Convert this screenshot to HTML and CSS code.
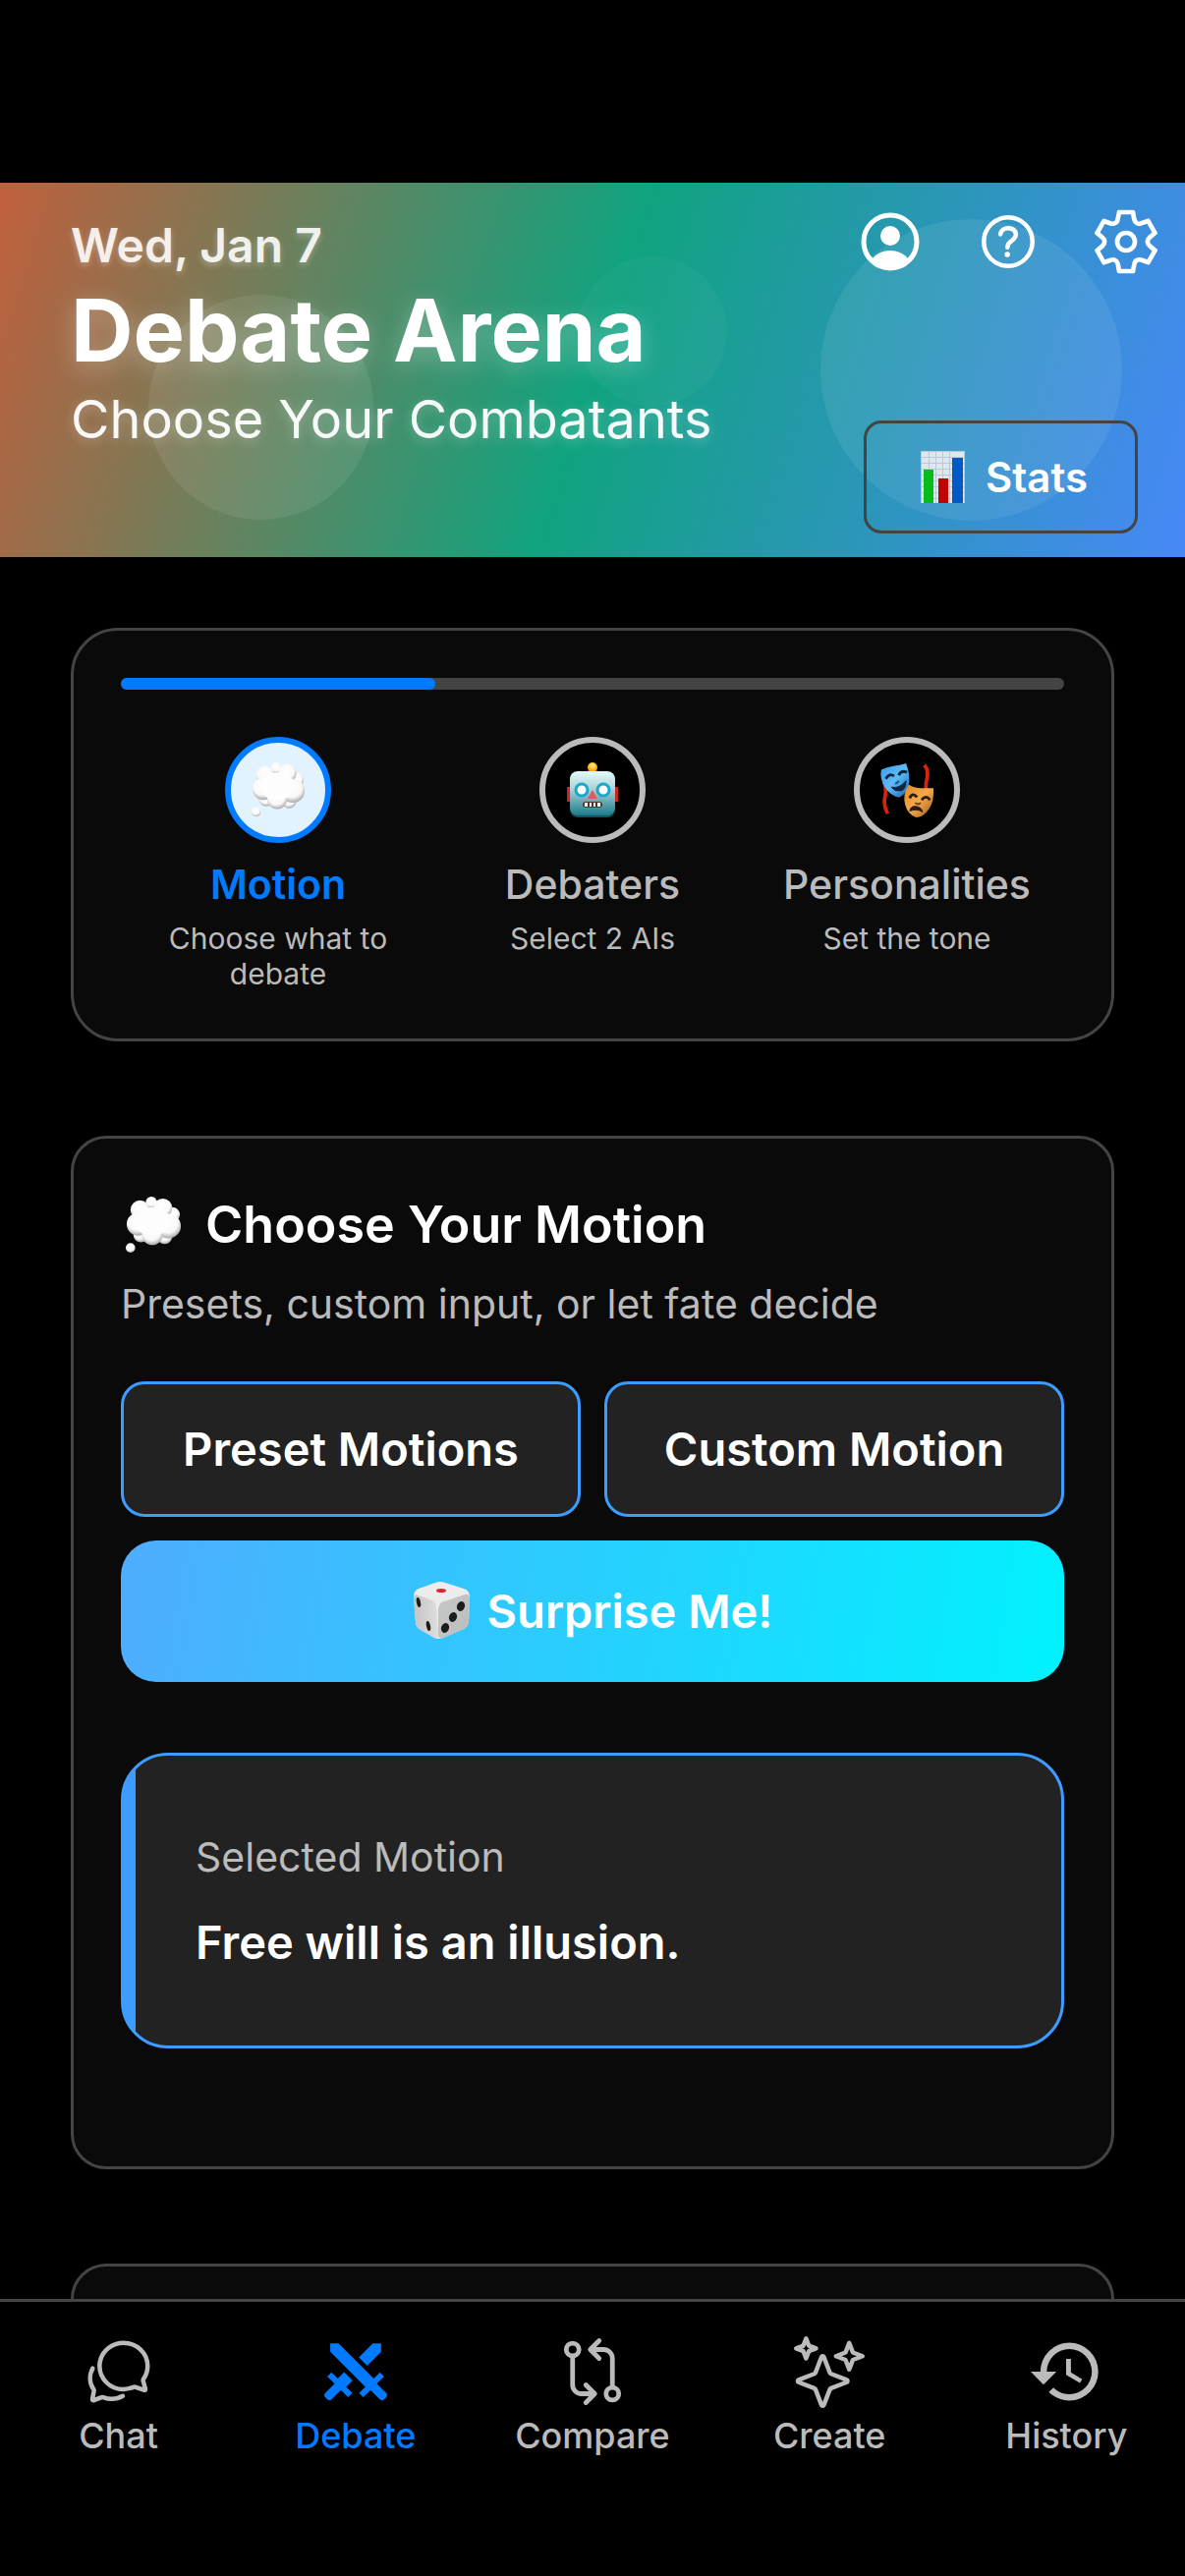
FILE: index.html
```html
<!DOCTYPE html>
<html lang="en">
<head>
<meta charset="utf-8">
<meta name="viewport" content="width=device-width, initial-scale=1">
<title>Debate Arena</title>
<link rel="stylesheet" href="styles.css">
</head>
<body>
<svg class="defs" aria-hidden="true">
  <defs>
    <radialGradient id="puff" cx="46%" cy="36%" r="64%">
      <stop offset="0" stop-color="#fff"/><stop offset=".65" stop-color="#f8f8f8"/><stop offset="1" stop-color="#a6a6a6"/>
    </radialGradient>
    <linearGradient id="metal" x1="0" y1="0" x2="0" y2="1">
      <stop offset="0" stop-color="#e6fbfa"/><stop offset=".4" stop-color="#a9d3d6"/><stop offset="1" stop-color="#1c7b8d"/>
    </linearGradient>
    <radialGradient id="bulb" cx="50%" cy="35%" r="60%">
      <stop offset="0" stop-color="#fff27a"/><stop offset="1" stop-color="#ff9500"/>
    </radialGradient>
    <linearGradient id="joy" x1="0" y1="0" x2="1" y2="1">
      <stop offset="0" stop-color="#3d9be6"/><stop offset=".5" stop-color="#5cbcf8"/><stop offset="1" stop-color="#1c5fae"/>
    </linearGradient>
    <linearGradient id="woe" x1="0" y1="0" x2="1" y2="1">
      <stop offset="0" stop-color="#e08a25"/><stop offset=".5" stop-color="#f5a94c"/><stop offset="1" stop-color="#a35a14"/>
    </linearGradient>
    <linearGradient id="dieLeft" x1="0" y1="0" x2="1" y2="0">
      <stop offset="0" stop-color="#c4c4c4"/><stop offset="1" stop-color="#dedede"/>
    </linearGradient>
    <linearGradient id="dieRight" x1="0" y1="0" x2="1" y2="1">
      <stop offset="0" stop-color="#c6c8c8"/><stop offset="1" stop-color="#bcbcbc"/>
    </linearGradient>
    <symbol id="thought" viewBox="0 0 60 60">
      <g fill="url(#puff)">
        <circle cx="50" cy="19" r="8"/><circle cx="17" cy="40" r="8"/><circle cx="42" cy="42" r="8"/>
        <circle cx="28" cy="6" r="6"/><circle cx="16" cy="14" r="10"/><circle cx="40" cy="12" r="10"/>
        <circle cx="14" cy="29" r="12"/><circle cx="46" cy="31" r="13"/><circle cx="29" cy="40" r="11"/>
        <circle cx="6" cy="54" r="5"/>
      </g>
      <ellipse cx="29" cy="26" rx="19" ry="15" fill="#fdfdfd"/>
    </symbol>
    <path id="cog" d="M-21-90H21L25-68Q27-60 33-57Q38-53 46-56L67-63"/>
  </defs>
</svg>

<div class="app">
  <header class="hero">
    <span class="orb orb-left"></span>
    <span class="orb orb-mid"></span>
    <span class="orb orb-right"></span>
    <div class="hero-text">
      <p class="date">Wed, Jan 7</p>
      <h1>Debate Arena</h1>
      <p class="tagline">Choose Your Combatants</p>
    </div>
    <div class="hero-side">
      <div class="hero-actions">
        <button class="icon-button" aria-label="Profile">
          <svg viewBox="0 0 72 72"><circle cx="36" cy="36" r="27" fill="none" stroke="currentColor" stroke-width="5"/><ellipse cx="36" cy="30" rx="10" ry="10" fill="currentColor"/><path d="M17 54C22 48 29 45 36 45s14 3 19 9a27 27 0 0 1-38 0z" fill="currentColor"/></svg>
        </button>
        <button class="icon-button" aria-label="Help">
          <svg viewBox="0 0 512 512" fill="none" stroke="currentColor" stroke-width="32" stroke-linecap="round"><circle cx="256" cy="256" r="176"/><path d="M200 202.29s.84-17.5 19.57-32.57C230.68 160.77 244 158.18 256 158c10.93-.14 20.69 1.67 26.53 4.45 10 4.76 29.47 16.38 29.47 41.09 0 26-17 37.81-36.37 50.8S251 281.43 251 296"/><circle cx="250" cy="348" r="20" fill="currentColor" stroke="none"/></svg>
        </button>
        <button class="icon-button" aria-label="Settings">
          <svg viewBox="-108 -108 216 216" fill="none" stroke="currentColor" stroke-width="14" stroke-linecap="round" stroke-linejoin="round"><use href="#cog"/><use href="#cog" transform="rotate(60)"/><use href="#cog" transform="rotate(120)"/><use href="#cog" transform="rotate(180)"/><use href="#cog" transform="rotate(240)"/><use href="#cog" transform="rotate(300)"/><circle r="27"/></svg>
        </button>
      </div>
      <button class="stats">
        <svg class="chart" viewBox="0 0 45 53" aria-hidden="true"><path fill="#dfe7ee" d="M0 0h45v53H0z"/><path stroke="#b9c9d6" stroke-width="1" fill="none" d="M.5 0v53M44.500 0v53M0 .5h45M0 6.500h45M0 12.500h45M0 18.500h45M0 24.500h45M0 30.500h45M0 36.500h45M0 42.500h45M0 48.500h45M8.500 0v53M15.500 0v53M22.500 0v53M29.500 0v53"/><path fill="#05bd1b" d="M3 19h10v34H3z"/><path fill="#c00303" d="M18 28h10v25H18z"/><path fill="#0459c4" d="M32 7h11v46H32z"/></svg>
        <span>Stats</span>
      </button>
    </div>
  </header>

  <main class="content">
    <section class="card steps-card">
      <div class="progress"><div class="progress-fill"></div></div>
      <ol class="steps">
        <li class="step active">
          <span class="step-badge"><svg class="step-icon" aria-hidden="true"><use href="#thought"/></svg></span>
          <span class="step-name">Motion</span>
          <span class="step-note">Choose what to debate</span>
        </li>
        <li class="step">
          <span class="step-badge">
            <svg class="step-icon" viewBox="0 0 56 56" aria-hidden="true"><path fill="#d21f26" d="M2 25h5v15H2zM49 25h5v15h-5z"/><ellipse cx="28" cy="11" rx="6" ry="4" fill="#6a4d8f"/><circle cx="28" cy="5" r="5" fill="url(#bulb)"/><rect x="5" y="10" width="46" height="46" rx="8" fill="#12505c"/><rect x="5" y="9" width="46" height="45" rx="8" fill="url(#metal)"/><g fill="#fff" stroke="#19a7cc" stroke-width="3"><circle cx="17" cy="28" r="6"/><circle cx="39" cy="28" r="6"/></g><path fill="#e2595c" d="M28 28l5 9H23z"/><rect x="18" y="40" width="20" height="6" rx="3" fill="#4d3a30"/><path fill="#fff" d="M20 41h3v4h-3zM25 41h2v4h-2zM29 41h2v4h-2zM33 41h3v4h-3z"/></svg>
          </span>
          <span class="step-name">Debaters</span>
          <span class="step-note">Select 2 AIs</span>
        </li>
        <li class="step">
          <span class="step-badge">
            <svg class="step-icon" viewBox="0 0 60 60" aria-hidden="true"><path d="M5 20q3 10 1 18t3 18M49 3q5 6 3 14t-1 12" fill="none" stroke="#d8240a" stroke-width="4"/><path d="M2 8Q8 5 15 4T29 1Q34 14 32 24T22 38Q12 37 6 27T2 8z" fill="url(#joy)"/><path d="M7 18q4-7 9-3M21 14q3-6 9-3" fill="none" stroke="#0b2740" stroke-width="3"/><path d="M13 27q9 2 16-7 0 10-6 11t-10-4z" fill="#0b2740" stroke="#0b2740" stroke-width="1"/><path d="M17 23q3 0 4-3" fill="none" stroke="#17568e" stroke-width="2"/><path d="M32 24Q38 28 45 28T59 28Q60 42 54 51T40 60Q31 57 28 46T32 24z" fill="url(#woe)"/><path d="M33 39q3-7 8-1M46 41q5-6 9 0" fill="none" stroke="#2a1c12" stroke-width="3"/><path d="M33 53q1-6 7-5t7 6q-6-4-14-1z" fill="#2a1c12" stroke="#2a1c12" stroke-width="1"/><path d="M39 44q3 3 6 0" fill="none" stroke="#6d3b10" stroke-width="2"/></svg>
          </span>
          <span class="step-name">Personalities</span>
          <span class="step-note">Set the tone</span>
        </li>
      </ol>
    </section>

    <section class="card">
      <h2><svg class="title-icon" aria-hidden="true"><use href="#thought"/></svg>Choose Your Motion</h2>
      <p class="lead">Presets, custom input, or let fate decide</p>
      <div class="choices">
        <button class="choice">Preset Motions</button>
        <button class="choice">Custom Motion</button>
        <button class="surprise">
          <svg class="die" viewBox="0 0 60 60" aria-hidden="true"><path fill="#ececec" d="M1 15Q1 9 6 7L23 1Q28-1 33 1L52 7Q58 9 58 15L57 41Q56 46 52 48L31 57Q27 59 22 57L8 49Q4 47 3 42z"/><path fill="url(#dieLeft)" d="M1 16Q2 12 6 14L20 19Q24 21 24 26L26 53Q26 58 22 57L8 49Q4 47 3 42z"/><path fill="url(#dieRight)" d="M26 27Q27 21 32 20L53 13Q58 12 58 17L57 41Q56 46 52 48L31 57Q26 59 26 53z"/><ellipse cx="29" cy="9" rx="5" ry="2" fill="#e5232e"/><g fill="#1c1c1c"><ellipse cx="6" cy="21" rx="2" ry="5" transform="rotate(-12 6 21)"/><ellipse cx="16" cy="45" rx="2" ry="5" transform="rotate(-12 16 45)"/><ellipse cx="49" cy="25" rx="4" ry="5" transform="rotate(20 49 25)"/><ellipse cx="41" cy="36" rx="4" ry="5" transform="rotate(20 41 36)"/><ellipse cx="33" cy="47" rx="4" ry="5" transform="rotate(20 33 47)"/></g></svg>
          <span>Surprise Me!</span>
        </button>
      </div>
      <div class="selected">
        <p class="selected-label">Selected Motion</p>
        <p class="selected-text">Free will is an illusion.</p>
      </div>
    </section>

    <section class="card next-card"></section>
  </main>

  <nav class="tabs">
    <a class="tab" href="#chat">
      <svg viewBox="0 0 512 512" fill="none" stroke="currentColor" stroke-width="32" stroke-linecap="round"><path d="M431 320.600c-1-3.600 1.200-8.600 3.300-12.200a33.680 33.680 0 012.100-3.100A162 162 0 00464 215c.3-92.200-77.500-167-173.700-167-83.900 0-153.900 57.100-170.300 132.900a160.700 160.700 0 00-3.700 34.200c0 92.300 74.800 169.100 171 169.100 15.300 0 35.900-4.600 47.200-7.700s22.500-7.200 25.400-8.300a26.440 26.440 0 019.300-1.700 26 26 0 0110.100 2l56.700 20.100a13.520 13.520 0 003.900 1 8 8 0 008-8 12.850 12.850 0 00-.5-2.700z"/><path d="M66.460 232a146.230 146.230 0 006.390 152.670c2.310 3.490 3.610 6.190 3.210 8s-11.930 61.870-11.930 61.870a8 8 0 002.710 7.680A8.170 8.170 0 0072 464a7.260 7.260 0 002.910-.6l56.210-22a15.700 15.700 0 0112 .2c18.940 7.380 39.880 12 60.830 12A159.210 159.210 0 00284 432.110"/></svg>
      <span>Chat</span>
    </a>
    <a class="tab current" href="#debate" aria-current="page">
      <svg viewBox="0 0 24 24" fill="currentColor"><path d="M6.200,2.440L18.100,14.340L20.220,12.220L21.630,13.630L19.160,16.100L22.340,19.280C22.730,19.670 22.730,20.300 22.340,20.690L21.630,21.400C21.240,21.790 20.610,21.790 20.220,21.400L17,18.230L14.560,20.700L13.150,19.290L15.270,17.170L3.370,5.270V2.440H6.200M15.890,10L20.630,5.260V2.440H17.800L13.060,7.180L15.890,10M10.940,15L8.110,12.130L5.900,14.340L3.780,12.220L2.370,13.630L4.840,16.100L1.660,19.290C1.270,19.680 1.270,20.310 1.660,20.700L2.370,21.410C2.760,21.800 3.390,21.800 3.780,21.410L7,18.230L9.440,20.700L10.850,19.290L8.730,17.170L10.940,15Z"/></svg>
      <span>Debate</span>
    </a>
    <a class="tab" href="#compare">
      <svg viewBox="0 0 512 512" fill="none" stroke="currentColor" stroke-width="34" stroke-linecap="round" stroke-linejoin="round"><circle cx="112" cy="96" r="46"/><circle cx="400" cy="416" r="46"/><path d="M112 144v208a64 64 0 0064 64h88M400 368V160a64 64 0 00-64-64h-88M304 160l-64-64 64-64M208 352l64 64-64 64"/></svg>
      <span>Compare</span>
    </a>
    <a class="tab" href="#create">
      <svg viewBox="0 0 512 512" fill="none" stroke="currentColor" stroke-width="32" stroke-linejoin="round"><path d="M259.920 262.910L216.400 149.770a9 9 0 00-16.800 0l-43.520 113.140a16 16 0 01-9.170 9.170L33.770 315.600a9 9 0 000 16.800l113.140 43.520a16 16 0 019.170 9.170l43.520 113.140a9 9 0 0016.800 0l43.520-113.140a16 16 0 019.170-9.170l113.140-43.520a9 9 0 000-16.800l-113.140-43.520a16 16 0 01-9.170-9.170zM108 68L88 16 68 68 16 88l52 20 20 52 20-52 52-20-52-20zM426.670 117.330L400 48l-26.670 69.330L304 144l69.330 26.670L400 240l26.670-69.330L496 144l-69.330-26.670z"/></svg>
      <span>Create</span>
    </a>
    <a class="tab" href="#history">
      <svg viewBox="1 1 22 22" fill="currentColor"><path d="M13.500,8H12V13L16.280,15.540L17,14.330L13.500,12.250V8M13,3A9,9 0 0,0 4,12H1L4.960,16.030L9,12H6A7,7 0 0,1 13,5A7,7 0 0,1 20,12A7,7 0 0,1 13,19C11.070,19 9.320,18.210 8.060,16.940L6.640,18.360C8.270,20 10.500,21 13,21A9,9 0 0,0 22,12A9,9 0 0,0 13,3"/></svg>
      <span>History</span>
    </a>
  </nav>
</div>
</body>
</html>
```
FILE: styles.css
```css
:root {
  --accent: #007aff;
  --outline: #3d9cff;
  --line: #444;
  --muted: #bbb;
  --surface: #0a0a0a;
  --raised: #222;
}

* {
  box-sizing: border-box;
  margin: 0;
  padding: 0;
}

body {
  background: #000;
  color: #fff;
  font-family: Inter, "Liberation Sans", sans-serif;
}

button {
  border: 0;
  background: none;
  color: inherit;
  font: inherit;
  cursor: pointer;
}

svg {
  display: block;
  flex: none;
}

.defs {
  position: absolute;
  width: 0;
  height: 0;
}

.app {
  display: flex;
  flex-direction: column;
  height: 100vh;
  padding-top: 186px;
}

/* Header */

.hero {
  position: relative;
  flex: none;
  display: flex;
  justify-content: space-between;
  padding: 24px 24px 24px 72px;
  background: linear-gradient(107.5deg, #c15f3c, #10a37f 50%, #4888f8);
  overflow: hidden;
}

.orb {
  position: absolute;
  border-radius: 50%;
  background: rgba(255, 255, 255, 0.08);
}

.orb-left {
  left: 151px;
  top: 114px;
  width: 229px;
  height: 229px;
}

.orb-mid {
  left: 588px;
  top: 75px;
  width: 152px;
  height: 152px;
  background: rgba(255, 255, 255, 0.03);
}

.orb-right {
  right: 64px;
  top: 37px;
  width: 307px;
  height: 307px;
}

.hero-text,
.hero-side {
  position: relative;
}

.hero-text {
  padding-top: 10px;
}

.date {
  font-size: 48px;
  font-weight: 600;
  line-height: 60px;
  color: rgba(255, 255, 255, 0.9);
  text-shadow: 0 3px 6px rgba(255, 255, 255, 0.3);
}

h1 {
  font-size: 88px;
  font-weight: 700;
  line-height: 112px;
  text-shadow: 0 6px 24px rgba(255, 255, 255, 0.3);
}

.tagline {
  font-size: 54px;
  font-weight: 400;
  line-height: 70px;
  color: rgba(255, 255, 255, 0.95);
  text-shadow: 0 3px 12px rgba(255, 255, 255, 0.3);
}

.hero-side {
  display: flex;
  flex-direction: column;
  align-items: flex-end;
  gap: 146px;
}

.hero-actions {
  display: flex;
  gap: 48px;
}

.icon-button svg {
  width: 72px;
  height: 72px;
}

.stats {
  display: flex;
  align-items: center;
  justify-content: flex-end;
  gap: 21px;
  width: 279px;
  height: 115px;
  margin-right: 24px;
  padding-right: 48px;
  border: 3px solid var(--line);
  border-radius: 18px;
  font-size: 42px;
  font-weight: 600;
}

.chart {
  width: 45px;
  height: 53px;
}

/* Cards */

.content {
  flex: 1;
  min-height: 0;
  display: flex;
  flex-direction: column;
  gap: 96px;
  padding: 72px 72px 0;
  overflow: hidden;
}

.card {
  flex: none;
  padding: 48px;
  border: 3px solid var(--line);
  border-radius: 36px;
  background: var(--surface);
}

.steps-card {
  border-radius: 48px;
}

.next-card {
  height: 400px;
}

.progress {
  height: 12px;
  border-radius: 6px;
  background: var(--line);
}

.progress-fill {
  width: 33.333%;
  height: 12px;
  border-radius: 6px;
  background: var(--accent);
}

.steps {
  display: grid;
  grid-template-columns: repeat(3, 1fr);
  margin-top: 48px;
  list-style: none;
}

.step {
  display: flex;
  flex-direction: column;
  align-items: center;
  color: var(--muted);
  text-align: center;
}

.step-badge {
  display: flex;
  align-items: center;
  justify-content: center;
  width: 108px;
  height: 108px;
  margin-bottom: 12px;
  border: 6px solid var(--muted);
  border-radius: 50%;
  background: #000;
}

.active .step-badge {
  border-color: var(--accent);
  background: #e3f2ff;
}

.step-icon {
  width: 56px;
  height: 56px;
}

.step-name {
  font-size: 41px;
  font-weight: 500;
  line-height: 60px;
}

.active .step-name {
  color: var(--accent);
  font-weight: 600;
}

.step-note {
  margin-top: 7px;
  padding: 0 24px;
  font-size: 30px;
  line-height: 36px;
}

h2 {
  display: flex;
  align-items: center;
  gap: 24px;
  padding-left: 4px;
  font-size: 52px;
  font-weight: 600;
  line-height: 80px;
}

.title-icon {
  width: 58px;
  height: 58px;
}

.lead {
  margin: 10px 0 49px;
  color: var(--muted);
  font-size: 41px;
  line-height: 60px;
}

.choices {
  display: grid;
  grid-template-columns: 1fr 1fr;
  gap: 24px;
}

.choice,
.surprise {
  font-size: 47px;
  font-weight: 600;
  line-height: 60px;
}

.choice {
  padding: 36px 0;
  border: 3px solid var(--outline);
  border-radius: 24px;
  background: var(--raised);
}

.surprise {
  grid-column: 1 / -1;
  display: flex;
  align-items: center;
  justify-content: center;
  gap: 16px;
  padding: 42px 0;
  border-radius: 36px;
  background: linear-gradient(98.5deg, #4facfe, #00f2fe);
}

.die {
  width: 60px;
  height: 60px;
}

.selected {
  margin: 72px 0;
  padding: 73px;
  border: 3px solid var(--outline);
  border-radius: 48px;
  background: linear-gradient(to right, var(--outline) 12px, var(--raised) 12px);
}

.selected-label {
  margin-bottom: 24px;
  color: var(--muted);
  font-size: 41px;
  line-height: 60px;
}

.selected-text {
  font-size: 47px;
  font-weight: 600;
  line-height: 65px;
}

/* Tab bar */

.tabs {
  flex: none;
  display: grid;
  grid-template-columns: repeat(5, 1fr);
  padding: 35px 0 118px;
  border-top: 3px solid var(--line);
  background: #000;
}

.tab {
  display: flex;
  flex-direction: column;
  align-items: center;
  gap: 4px;
  color: var(--muted);
  font-size: 36px;
  font-weight: 500;
  line-height: 50px;
  text-decoration: none;
}

.tab svg {
  width: 72px;
  height: 72px;
  overflow: visible;
}

.current {
  color: var(--accent);
}
```
